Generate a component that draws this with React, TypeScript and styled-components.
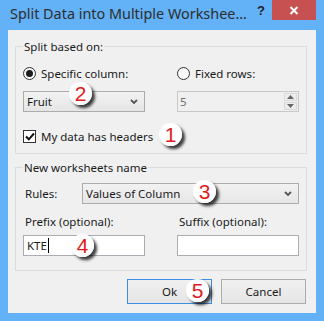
import React from 'react';
import styled, { createGlobalStyle } from 'styled-components';

const GlobalStyle = createGlobalStyle`
  html, body {
    margin: 0;
    padding: 0;
    background: #63b1f6;
  }
  * {
    box-sizing: border-box;
  }
`;

const FONT = `"Noto Sans", "Open Sans", sans-serif`;

const Window = styled.div`
  position: relative;
  width: 324px;
  height: 321px;
  background: #63b1f6;
  padding: 0 8px 8px 8px;
  display: flex;
  flex-direction: column;
  font-family: ${FONT};
  font-size: 11.5px;
  color: #1a1a1a;
`;

const TitleBar = styled.div`
  height: 30px;
  display: flex;
  align-items: flex-start;
`;

const Title = styled.div`
  flex: 1;
  min-width: 0;
  overflow: hidden;
  padding: 4px 0 0 2px;
  font-size: 14.4px;
  line-height: 20px;
  color: #2d2d2d;
  white-space: nowrap;
`;

const HelpButton = styled.div`
  width: 20px;
  height: 20px;
  font-family: "Liberation Sans", Arial, sans-serif;
  font-weight: bold;
  font-size: 13px;
  line-height: 22px;
  color: #222;
  padding-left: 5px;
`;

const CloseButton = styled.div`
  width: 44px;
  height: 20px;
  background: #c75050;
  display: flex;
  align-items: center;
  justify-content: center;
`;

const Client = styled.div`
  flex: 1;
  background: #f0f0f0;
  padding: 9px 9px 0 7px;
  display: flex;
  flex-direction: column;
`;

const Group = styled.fieldset<{ $gap?: number }>`
  margin: ${(p) => p.$gap ?? 0}px 0 0 0;
  padding: 0 7px 0 7px;
  border: 1px solid #dcdcdc;
  min-width: 0;
`;

const Legend = styled.legend`
  padding: 0 1px;
  line-height: 15px;
`;

const TwoCols = styled.div<{ $top: number; $h: number; $bottom?: number }>`
  display: grid;
  grid-template-columns: 122px 122px;
  column-gap: 32px;
  margin-top: ${(p) => p.$top}px;
  margin-bottom: ${(p) => p.$bottom ?? 0}px;
  height: ${(p) => p.$h}px;
  align-items: center;
`;

const Option = styled.label`
  display: flex;
  align-items: center;
  gap: 5px;
  height: 16px;
  white-space: nowrap;
`;

const RadioDot = styled.span<{ $on?: boolean }>`
  width: 13px;
  height: 13px;
  border-radius: 50%;
  border: 1px solid #333;
  background: linear-gradient(#f4f4f4, #ffffff);
  display: flex;
  align-items: center;
  justify-content: center;
  &::after {
    content: '';
    width: 7px;
    height: 7px;
    border-radius: 50%;
    background: ${(p) => (p.$on ? '#1c1c1c' : 'transparent')};
  }
`;

const Combo = styled.div`
  height: 21px;
  border: 1px solid #acacac;
  background: linear-gradient(#f2f2f2, #e6e6e6);
  display: flex;
  align-items: center;
  padding: 0 6px 0 3px;
  justify-content: space-between;
  white-space: nowrap;
`;

const SpinBox = styled.div`
  height: 21px;
  border: 1px solid #c8c8c8;
  background: #f0f0f0;
  display: flex;
  align-items: stretch;
  color: #6d6d6d;
`;

const SpinValue = styled.div`
  flex: 1;
  display: flex;
  align-items: center;
  padding-left: 2px;
`;

const SpinArrows = styled.div`
  width: 15px;
  display: flex;
  flex-direction: column;
  padding: 1px;
  gap: 1px;
`;

const SpinHalf = styled.div`
  flex: 1;
  border: 1px solid #d9d9d9;
  background: #ececec;
  display: flex;
  align-items: center;
  justify-content: center;
`;

const CheckRow = styled.label`
  display: flex;
  align-items: center;
  gap: 5px;
  height: 16px;
  margin-top: 16px;
  margin-bottom: 9px;
`;

const CheckBox = styled.span`
  width: 13px;
  height: 13px;
  border: 1px solid #333;
  background: #fff;
  display: flex;
  align-items: center;
  justify-content: center;
`;

const RulesRow = styled.div`
  display: grid;
  grid-template-columns: 59px 1fr;
  align-items: center;
  margin-top: 8px;
  height: 21px;
`;

const FieldLabel = styled.div`
  padding-left: 2px;
  white-space: nowrap;
`;

const TextBox = styled.div`
  height: 21px;
  border: 1px solid #abadb3;
  background: #fff;
  display: flex;
  align-items: center;
  padding-left: 3px;
`;

const Caret = styled.span`
  display: inline-block;
  width: 1px;
  height: 15px;
  background: #000;
  margin-left: 1px;
`;

const ButtonRow = styled.div`
  display: flex;
  justify-content: flex-end;
  gap: 9px;
  margin-top: 8px;
  padding-right: 1px;
`;

const Button = styled.div<{ $default?: boolean }>`
  width: 85px;
  height: 25px;
  border: 1px solid ${(p) => (p.$default ? '#3d8ee0' : '#acacac')};
  background: linear-gradient(#f0f0f0, #e5e5e5);
  display: flex;
  align-items: center;
  justify-content: center;
`;

const Badge = styled.div<{ $x: number; $y: number }>`
  position: absolute;
  left: ${(p) => p.$x - 11}px;
  top: ${(p) => p.$y - 11}px;
  width: 23px;
  height: 23px;
  border-radius: 50%;
  background: radial-gradient(circle at 40% 35%, #ffffff 60%, #ececec 100%);
  box-shadow: 3px 3px 3px rgba(0, 0, 0, 0.75);
  color: #e01b1b;
  font-family: "Liberation Sans", Arial, sans-serif;
  font-size: 21px;
  line-height: 23px;
  text-align: center;
`;

const Chevron = () => (
  <svg width="8" height="5" viewBox="0 0 8 5">
    <path d="M1 1 L4 4 L7 1" fill="none" stroke="#555" strokeWidth="1.8" />
  </svg>
);

const Tri = ({ up }: { up?: boolean }) => (
  <svg width="7" height="4" viewBox="0 0 7 4">
    <path d={up ? 'M0 4 L3.5 0 L7 4 Z' : 'M0 0 L3.5 4 L7 0 Z'} fill="#666" />
  </svg>
);

export default function App() {
  return (
    <>
      <GlobalStyle />
      <Window>
        <TitleBar>
          <Title>Split Data into Multiple Workshee...</Title>
          <HelpButton>?</HelpButton>
          <CloseButton>
            <svg width="10" height="9" viewBox="0 0 10 9">
              <path d="M1.5 1 L8.5 8 M8.5 1 L1.5 8" stroke="#fff" strokeWidth="2" />
            </svg>
          </CloseButton>
        </TitleBar>
        <Client>
          <Group>
            <Legend>Split based on:</Legend>
            <TwoCols $top={11} $h={16}>
              <Option>
                <RadioDot $on />
                Specific column:
              </Option>
              <Option>
                <RadioDot />
                Fixed rows:
              </Option>
            </TwoCols>
            <TwoCols $top={10} $h={21}>
              <Combo>
                Fruit
                <Chevron />
              </Combo>
              <SpinBox>
                <SpinValue>5</SpinValue>
                <SpinArrows>
                  <SpinHalf>
                    <Tri up />
                  </SpinHalf>
                  <SpinHalf>
                    <Tri />
                  </SpinHalf>
                </SpinArrows>
              </SpinBox>
            </TwoCols>
            <CheckRow>
              <CheckBox>
                <svg width="10" height="9" viewBox="0 0 10 9">
                  <path d="M1 4.5 L3.8 7.3 L9 1.5" fill="none" stroke="#111" strokeWidth="2" />
                </svg>
              </CheckBox>
              My data has headers
            </CheckRow>
          </Group>
          <Group $gap={6}>
            <Legend>New worksheets name</Legend>
            <RulesRow>
              <FieldLabel>Rules:</FieldLabel>
              <Combo>
                Values of Column
                <Chevron />
              </Combo>
            </RulesRow>
            <TwoCols $top={9} $h={16}>
              <FieldLabel>Prefix (optional):</FieldLabel>
              <FieldLabel>Suffix (optional):</FieldLabel>
            </TwoCols>
            <TwoCols $top={6} $h={21} $bottom={14}>
              <TextBox>
                KTE
                <Caret />
              </TextBox>
              <TextBox />
            </TwoCols>
          </Group>
          <ButtonRow>
            <Button $default>Ok</Button>
            <Button>Cancel</Button>
          </ButtonRow>
        </Client>
        <Badge $x={170} $y={134}>1</Badge>
        <Badge $x={80} $y={93}>2</Badge>
        <Badge $x={204} $y={191}>3</Badge>
        <Badge $x={82} $y={245}>4</Badge>
        <Badge $x={197} $y={290}>5</Badge>
      </Window>
    </>
  );
}
